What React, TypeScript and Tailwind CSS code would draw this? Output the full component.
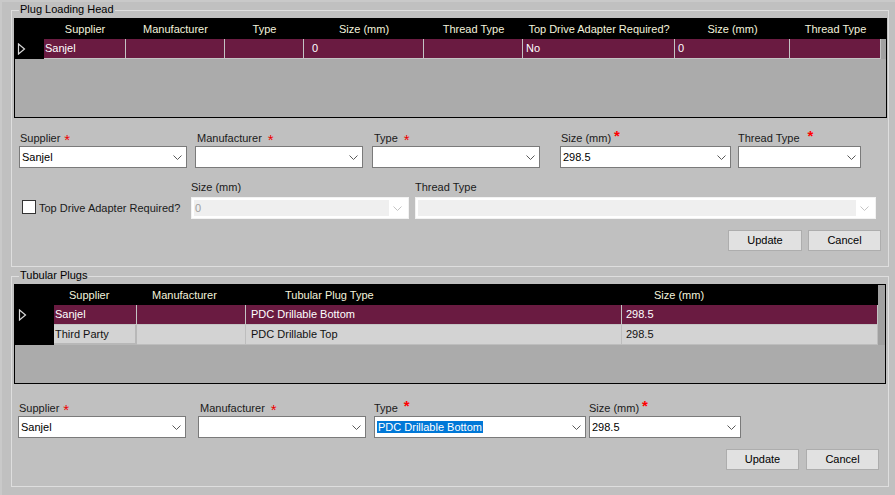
import type { ReactNode } from "react";

type Col = { h: string; w: number; hpl?: number };

const plugCols: Col[] = [
  { h: "Supplier", w: 82 },
  { h: "Manufacturer", w: 99 },
  { h: "Type", w: 79 },
  { h: "Size (mm)", w: 120 },
  { h: "Thread Type", w: 99 },
  { h: "Top Drive Adapter Required?", w: 152 },
  { h: "Size (mm)", w: 115 },
  { h: "Thread Type", w: 91 },
];
const plugRow = [
  { v: "Sanjel", pl: 1 },
  { v: "", pl: 2 },
  { v: "", pl: 2 },
  { v: "0", pl: 8 },
  { v: "", pl: 2 },
  { v: "No", pl: 3 },
  { v: "0", pl: 3 },
  { v: "", pl: 2 },
];

const tubCols: Col[] = [
  { h: "Supplier", w: 83, hpl: 15 },
  { h: "Manufacturer", w: 109, hpl: 15 },
  { h: "Tubular Plug Type", w: 376, hpl: 39 },
  { h: "Size (mm)", w: 256, hpl: 32 },
];
const tubRows = [
  ["Sanjel", "", "PDC Drillable Bottom", "298.5"],
  ["Third Party", "", "PDC Drillable Top", "298.5"],
];
const tubPl = [1, 2, 5, 4];

function Chevron({ disabled }: { disabled?: boolean }) {
  return (
    <svg width="9" height="5" viewBox="0 0 9 5">
      <polyline points="0.5,0.5 4.5,4.5 8.5,0.5" fill="none" stroke={disabled ? "#c4c4c4" : "#5a5a5a"} strokeWidth="1" />
    </svg>
  );
}

function RowArrow() {
  return (
    <svg width="9" height="12" viewBox="0 0 9 12">
      <polygon points="1.5,1 7.5,6 1.5,11" fill="none" stroke="#d8d8d8" strokeWidth="1.2" />
    </svg>
  );
}

function Combo({ value, selected }: { value?: string; selected?: boolean }) {
  return (
    <div className="flex h-[22px] items-center border border-[#7a7a7a] bg-white">
      <div className="flex-1 truncate pl-[2px] text-black">
        {selected ? <span className="bg-[#0078d7] px-[1px] text-white">{value}</span> : value}
      </div>
      <div className="flex w-[17px] justify-center">
        <Chevron />
      </div>
    </div>
  );
}

function DisabledCombo({ value }: { value?: string }) {
  return (
    <div className="flex h-[22px] border border-[#f2f2f2] bg-white p-[2px]">
      <div className="flex flex-1 items-center bg-[#efefef] pl-[1px] text-[#a0a0a0]">{value}</div>
      <div className="flex w-[17px] items-center justify-center">
        <Chevron disabled />
      </div>
    </div>
  );
}

function Star({ big }: { big?: boolean }) {
  return big ? (
    <span className="inline-block -translate-y-[1px] text-[15px] font-bold leading-[13px] text-[#f00]">*</span>
  ) : (
    <span className="inline-block translate-y-[3px] text-[15px] leading-[13px] text-[#e00]">*</span>
  );
}

function Field({ label, w, lx = 0, star, gap = 4, children }: { label: string; w: number; lx?: number; star?: "s" | "b"; gap?: number; children: ReactNode }) {
  return (
    <div style={{ width: w }} className="shrink-0">
      <div className="h-[16px] whitespace-nowrap text-[#1a1a1a]" style={{ paddingLeft: lx }}>
        {label}
        {star && (
          <span style={{ marginLeft: gap }}>
            <Star big={star === "b"} />
          </span>
        )}
      </div>
      {children}
    </div>
  );
}

function Button({ label, w }: { label: string; w: number }) {
  return (
    <div style={{ width: w }} className="flex h-[21px] items-center justify-center border border-[#adadad] bg-[#e1e1e1] text-black">
      {label}
    </div>
  );
}

function GroupBox({ title, h, children }: { title: string; h: number; children: ReactNode }) {
  return (
    <div style={{ height: h }} className="relative ml-[11px] w-[878px] border border-[#dedede]">
      <span className="absolute -top-[8px] left-[7px] bg-[#c0c0c0] px-[1px] text-black">{title}</span>
      {children}
    </div>
  );
}

function PlugGrid() {
  return (
    <div className="ml-[2px] mt-[7px] h-[100px] w-[873px] border border-black bg-[#ababab]">
      <div className="flex h-[20px] bg-black text-[#f3f3dc]">
        <div className="w-[29px]" />
        {plugCols.map((c, i) => (
          <div key={i} style={{ width: c.w }} className="flex items-center justify-center whitespace-nowrap">
            {c.h}
          </div>
        ))}
      </div>
      <div className="flex h-[20px]">
        <div className="flex w-[29px] items-center bg-black pl-[2px]">
          <RowArrow />
        </div>
        {plugCols.map((c, i) => (
          <div
            key={i}
            style={{ width: c.w, paddingLeft: plugRow[i].pl }}
            className="flex items-center border-b border-r border-[#c4c4c4] bg-[#6a1b41] text-white last:border-r-0"
          >
            {plugRow[i].v}
          </div>
        ))}
        <div className="w-[5px] bg-[#a0a0a0]" />
      </div>
    </div>
  );
}

function TubularGrid() {
  return (
    <div className="ml-[2px] mt-[7px] h-[100px] w-[872px] border border-black bg-[#ababab]">
      <div className="flex h-[20px]">
        <div className="w-[39px] bg-black" />
        {tubCols.map((c, i) => (
          <div key={i} style={{ width: c.w, paddingLeft: c.hpl }} className="flex items-center whitespace-nowrap bg-black text-[#f3f3dc]">
            {c.h}
          </div>
        ))}
        <div className="w-[7px] bg-[#a0a0a0]" />
      </div>
      {tubRows.map((r, ri) => (
        <div key={ri} className="flex h-[20px]">
          <div className="flex w-[39px] items-center bg-black pl-[3px]">{ri === 0 && <RowArrow />}</div>
          {tubCols.map((c, i) => (
            <div
              key={i}
              style={{ width: c.w, paddingLeft: tubPl[i] }}
              className={
                ri === 0
                  ? "flex items-center border-b border-r border-[#c4c4c4] bg-[#6a1b41] text-white last:border-r-0"
                  : i === 0
                    ? "flex items-center border-b-2 border-r-2 border-[#b8b8b8] bg-[#d3d3d3] text-[#111]"
                    : "flex items-center border-b border-r border-[#bdbdbd] bg-[#d3d3d3] text-[#111] last:border-r-0"
              }
            >
              {r[i]}
            </div>
          ))}
          <div className="w-[7px] bg-[#a0a0a0]" />
        </div>
      ))}
    </div>
  );
}

export default function App() {
  return (
    <div className="h-[495px] w-[895px] overflow-hidden border-l-2 border-t-2 border-[#c9c9c9] bg-[#c0c0c0] pt-[8px] font-['Liberation_Sans',Arial,sans-serif] text-[11px] leading-[13px]">
      <div className="-ml-[2px]">
        <GroupBox title="Plug Loading Head" h={257}>
          <PlugGrid />
          <div className="ml-[7px] mt-[12px] flex">
            <Field label="Supplier" w={168} lx={1} star="s">
              <Combo value="Sanjel" />
            </Field>
            <div className="w-[8px]" />
            <Field label="Manufacturer" w={168} lx={2} star="s" gap={6}>
              <Combo />
            </Field>
            <div className="w-[9px]" />
            <Field label="Type" w={168} lx={2} star="s" gap={6}>
              <Combo />
            </Field>
            <div className="w-[20px]" />
            <Field label="Size (mm)" w={171} lx={1} star="b" gap={3}>
              <Combo value="298.5" />
            </Field>
            <div className="w-[7px]" />
            <Field label="Thread Type" w={123} star="b" gap={8}>
              <Combo />
            </Field>
          </div>
          <div className="ml-[10px] mt-[13px] flex">
            <div className="flex w-[169px] items-end pb-[4px]">
              <div className="mb-[1px] h-[14px] w-[14px] border border-[#333] bg-white" />
              <span className="ml-[3px] whitespace-nowrap text-[#1a1a1a]">Top Drive Adapter Required?</span>
            </div>
            <Field label="Size (mm)" w={218} lx={0}>
              <DisabledCombo value="0" />
            </Field>
            <div className="w-[6px]" />
            <Field label="Thread Type" w={461}>
              <DisabledCombo />
            </Field>
          </div>
          <div className="mr-[7px] mt-[11px] flex justify-end gap-[6px]">
            <Button label="Update" w={74} />
            <Button label="Cancel" w={73} />
          </div>
        </GroupBox>
        <div className="h-[9px]" />
        <GroupBox title="Tubular Plugs" h={211}>
          <TubularGrid />
          <div className="ml-[6px] mt-[16px] flex">
            <Field label="Supplier" w={168} lx={1} star="s">
              <Combo value="Sanjel" />
            </Field>
            <div className="w-[12px]" />
            <Field label="Manufacturer" w={168} lx={2} star="s" gap={6}>
              <Combo />
            </Field>
            <div className="w-[8px]" />
            <Field label="Type" w={212} star="b" gap={6}>
              <Combo value="PDC Drillable Bottom" selected />
            </Field>
            <div className="w-[3px]" />
            <Field label="Size (mm)" w={152} star="b" gap={3}>
              <Combo value="298.5" />
            </Field>
          </div>
          <div className="mr-[9px] mt-[11px] flex justify-end gap-[7px]">
            <Button label="Update" w={73} />
            <Button label="Cancel" w={73} />
          </div>
        </GroupBox>
      </div>
    </div>
  );
}
